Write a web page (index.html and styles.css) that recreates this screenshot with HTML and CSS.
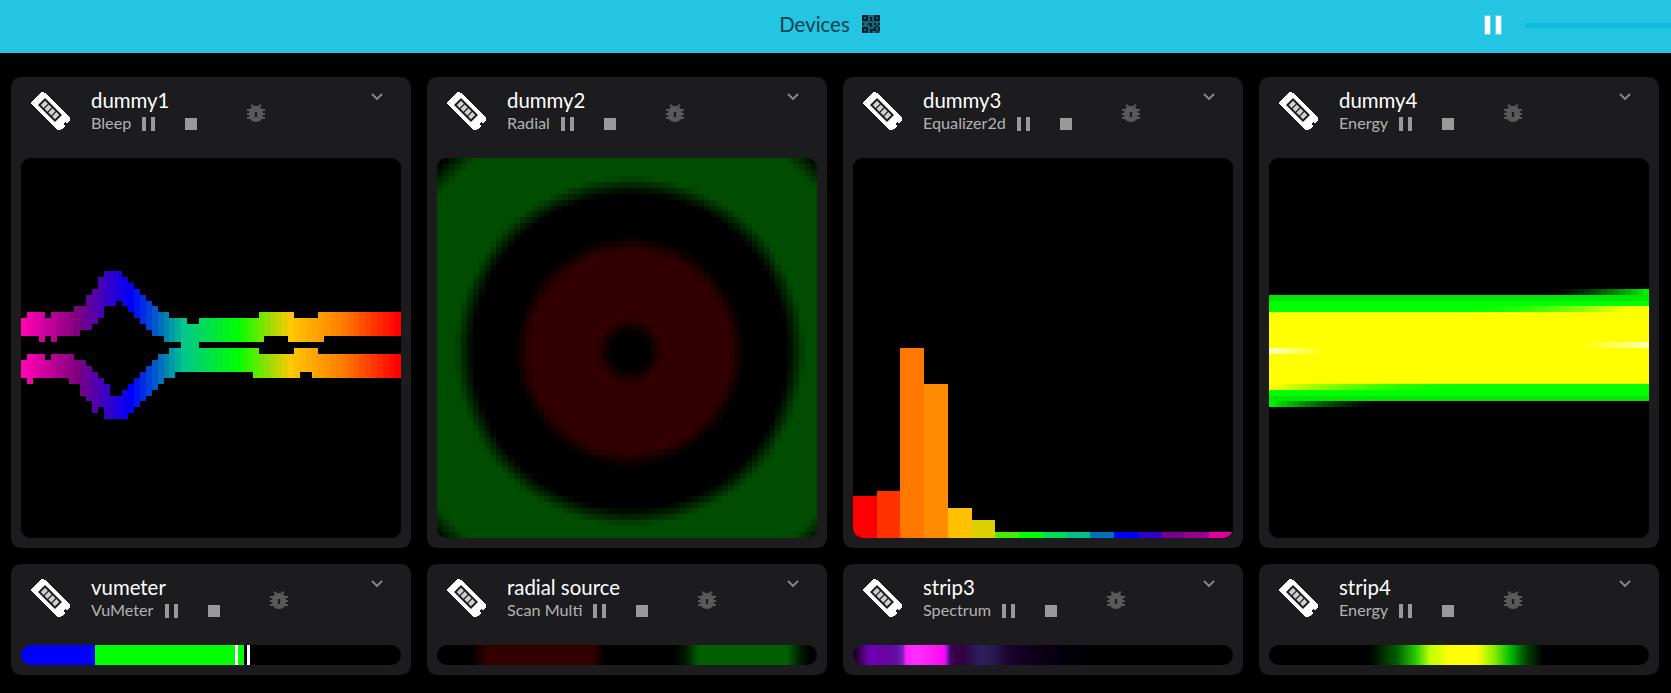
FILE: index.html
```html
<!DOCTYPE html>
<html lang="en">
<head>
  <meta charset="UTF-8">
  <title>Devices</title>
  <link rel="stylesheet" href="styles.css">
</head>
<body>

  <svg class="defs" width="0" height="0">
    <symbol id="icon-strip" viewBox="0 0 40 40">
      <path shape-rendering="crispEdges" fill="#fff" d="M11 0 L14 1 L39 26 L39 28 L36 31 L34 30 L33 32 L34 34 L31 37 L29 38 L27 38 L0 12 L0 10 Z"/>
      <g transform="translate(19 18) rotate(45)">
        <rect x="-12" y="-5" width="24" height="10" fill="#1c1c1e"/>
        <rect x="-10" y="-3" width="4" height="6" fill="#d0d0d0"/>
        <rect x="-4.7" y="-3" width="4" height="6" fill="#d0d0d0"/>
        <rect x="0.7" y="-3" width="4" height="6" fill="#d0d0d0"/>
        <rect x="6" y="-3" width="4" height="6" fill="#d0d0d0"/>
      </g>
    </symbol>
    <symbol id="icon-bug" viewBox="4 3 16 18" preserveAspectRatio="none">
      <path fill-rule="evenodd" d="M20 8H17.19C16.74 7.22 16.12 6.55 15.37 6.04L17 4.41L15.59 3L13.42 5.17C12.96 5.06 12.5 5 12 5C11.5 5 11.04 5.06 10.59 5.17L8.41 3L7 4.41L8.62 6.04C7.88 6.55 7.26 7.22 6.81 8H4V10H6.09C6.04 10.33 6 10.66 6 11V12H4V14H6V15C6 15.34 6.04 15.67 6.09 16H4V18H6.81C7.85 19.79 9.78 21 12 21C14.22 21 16.15 19.79 17.19 18H20V16H17.91C17.96 15.67 18 15.34 18 15V14H20V12H18V11C18 10.66 17.96 10.33 17.91 10H20V8ZM13 16H11V11H13Z"/>
    </symbol>
    <symbol id="icon-chevron" viewBox="0 0 12 8">
      <path d="M1 1 L6 6 L11 1" fill="none" stroke="currentColor" stroke-width="1.8"/>
    </symbol>
  </svg>

  <header class="topbar">
    <div class="topbar-title">
      <span>Devices</span>
      <svg class="qr" viewBox="3 3 18 18">
        <path d="M3,11H5V13H3V11M11,5H13V9H11V5M9,11H13V15H11V13H9V11M15,11H17V13H19V11H21V13H19V15H21V19H19V21H17V19H13V21H11V17H15V15H17V13H15V11M19,19V15H17V19H19M15,3H21V9H15V3M17,5V7H19V5H17M3,3H9V9H3V3M5,5V7H7V5H5M3,15H9V21H3V15M5,17V19H7V17H5Z"/>
      </svg>
    </div>
    <div class="topbar-controls">
      <span class="big-pause"><i></i><i></i></span>
      <div class="slider"></div>
    </div>
  </header>

  <main class="devices">

    <section class="card">
      <div class="card-head">
        <svg class="strip-icon"><use href="#icon-strip"/></svg>
        <div class="names">
          <div class="name">dummy1</div>
          <div class="effect">Bleep <span class="pause"><i></i><i></i></span><span class="stop"></span></div>
        </div>
        <svg class="bug"><use href="#icon-bug"/></svg>
        <svg class="chevron"><use href="#icon-chevron"/></svg>
      </div>
      <canvas class="matrix" id="bleep" width="64" height="64"></canvas>
    </section>

    <section class="card">
      <div class="card-head">
        <svg class="strip-icon"><use href="#icon-strip"/></svg>
        <div class="names">
          <div class="name">dummy2</div>
          <div class="effect">Radial <span class="pause"><i></i><i></i></span><span class="stop"></span></div>
        </div>
        <svg class="bug"><use href="#icon-bug"/></svg>
        <svg class="chevron"><use href="#icon-chevron"/></svg>
      </div>
      <canvas class="matrix" id="radial" width="64" height="64"></canvas>
    </section>

    <section class="card">
      <div class="card-head">
        <svg class="strip-icon"><use href="#icon-strip"/></svg>
        <div class="names">
          <div class="name">dummy3</div>
          <div class="effect">Equalizer2d <span class="pause"><i></i><i></i></span><span class="stop"></span></div>
        </div>
        <svg class="bug"><use href="#icon-bug"/></svg>
        <svg class="chevron"><use href="#icon-chevron"/></svg>
      </div>
      <canvas class="matrix" id="equalizer" width="64" height="64"></canvas>
    </section>

    <section class="card">
      <div class="card-head">
        <svg class="strip-icon"><use href="#icon-strip"/></svg>
        <div class="names">
          <div class="name">dummy4</div>
          <div class="effect">Energy <span class="pause"><i></i><i></i></span><span class="stop"></span></div>
        </div>
        <svg class="bug"><use href="#icon-bug"/></svg>
        <svg class="chevron"><use href="#icon-chevron"/></svg>
      </div>
      <canvas class="matrix" id="energy" width="64" height="64"></canvas>
    </section>

    <section class="card">
      <div class="card-head">
        <svg class="strip-icon"><use href="#icon-strip"/></svg>
        <div class="names">
          <div class="name">vumeter</div>
          <div class="effect">VuMeter <span class="pause"><i></i><i></i></span><span class="stop"></span></div>
        </div>
        <svg class="bug"><use href="#icon-bug"/></svg>
        <svg class="chevron"><use href="#icon-chevron"/></svg>
      </div>
      <div class="strip strip-vumeter"></div>
    </section>

    <section class="card">
      <div class="card-head">
        <svg class="strip-icon"><use href="#icon-strip"/></svg>
        <div class="names">
          <div class="name">radial source</div>
          <div class="effect">Scan Multi <span class="pause"><i></i><i></i></span><span class="stop"></span></div>
        </div>
        <svg class="bug"><use href="#icon-bug"/></svg>
        <svg class="chevron"><use href="#icon-chevron"/></svg>
      </div>
      <div class="strip strip-scan"></div>
    </section>

    <section class="card">
      <div class="card-head">
        <svg class="strip-icon"><use href="#icon-strip"/></svg>
        <div class="names">
          <div class="name">strip3</div>
          <div class="effect">Spectrum <span class="pause"><i></i><i></i></span><span class="stop"></span></div>
        </div>
        <svg class="bug"><use href="#icon-bug"/></svg>
        <svg class="chevron"><use href="#icon-chevron"/></svg>
      </div>
      <div class="strip strip-spectrum"></div>
    </section>

    <section class="card">
      <div class="card-head">
        <svg class="strip-icon"><use href="#icon-strip"/></svg>
        <div class="names">
          <div class="name">strip4</div>
          <div class="effect">Energy <span class="pause"><i></i><i></i></span><span class="stop"></span></div>
        </div>
        <svg class="bug"><use href="#icon-bug"/></svg>
        <svg class="chevron"><use href="#icon-chevron"/></svg>
      </div>
      <div class="strip strip-energy"></div>
    </section>

  </main>

  <script src="script.js"></script>
</body>
</html>
```
FILE: styles.css
```css
* {
  box-sizing: border-box;
}

body {
  margin: 0;
  background: #000;
  color: #fff;
  font-family: Lato, "Noto Sans", sans-serif;
  overflow: hidden;
}

.defs {
  position: absolute;
}

.topbar {
  display: flex;
  align-items: center;
  justify-content: center;
  height: 53px;
  background: #23c5e2;
  position: relative;
}

.topbar-title {
  display: flex;
  align-items: center;
  gap: 12px;
  margin-top: -5px;
  margin-left: -12px;
  font-size: 20.4px;
  color: #0d3d4d;
}

.qr {
  width: 18px;
  height: 18px;
  fill: #03202b;
  background: #1a6478;
}

.topbar-controls {
  position: absolute;
  top: 0;
  right: 0;
  bottom: 0;
  display: flex;
  align-items: center;
  gap: 24px;
  padding-bottom: 3px;
}

.big-pause {
  display: flex;
  gap: 6px;
}

.big-pause i {
  width: 5px;
  height: 18px;
  background: #fff;
  box-shadow: 0 0 0 1px rgba(255, 255, 255, 0.3);
}

.slider {
  width: 146px;
  height: 5px;
  background: #10bbdc;
  border-radius: 2px 0 0 2px;
}

.devices {
  display: grid;
  grid-template-columns: repeat(4, 400px);
  gap: 16px;
  padding: 24px 0 0 11px;
}

.card {
  background: #1c1c1e;
  border-radius: 10px;
  padding: 10px;
}

.card-head {
  display: flex;
  height: 71px;
  padding-left: 10px;
}

.strip-icon {
  width: 40px;
  height: 40px;
  margin-top: 5px;
  flex: none;
}

.names {
  margin-left: 20px;
  height: 46px;
  margin-top: 1px;
}

.name {
  font-size: 20.4px;
  line-height: 24px;
  white-space: nowrap;
}

.effect {
  display: flex;
  align-items: center;
  font-size: 16.2px;
  line-height: 22px;
  color: #b3b3b3;
  white-space: nowrap;
}

.pause {
  display: flex;
  gap: 5px;
  margin: 2px 0 0 11px;
}

.pause i {
  width: 4px;
  height: 14px;
  background: #999;
}

.stop {
  width: 12px;
  height: 12px;
  margin: 2px 0 0 30px;
  background: #999;
}

.bug {
  width: 18px;
  height: 18px;
  margin: 17px 0 0 50px;
  fill: #595959;
  flex: none;
}

.chevron {
  width: 12px;
  height: 8px;
  margin: 6px 18px 0 auto;
  color: #8a8a8a;
  flex: none;
}

.matrix {
  display: block;
  width: 380px;
  height: 380px;
  border-radius: 10px;
  background: #000;
  image-rendering: pixelated;
}

.strip {
  height: 20px;
  border-radius: 10px;
}

.strip-vumeter {
  background: linear-gradient(90deg,
    #0000ff 74px, #00ff00 74px,
    #00ff00 214px, #fff 214px,
    #fff 217px, #00ff00 217px,
    #00ff00 223px, #000 223px,
    #000 226px, #fff 226px,
    #fff 229px, #000 229px);
}

.strip-scan {
  background: linear-gradient(90deg,
    #000 33px, #330000 50px,
    #330000 156px, #000 168px,
    #000 236px, #001800 248px, #006000 262px,
    #006000 350px, #001800 364px, #000 373px);
}

.strip-spectrum {
  background: linear-gradient(90deg,
    #150020 0, #3a0050 7px, #7000b0 15px,
    #6a00a8 30px, #6010a0 44px, #8020c0 50px,
    #ff20ff 53px, #ff30ff 64px, #ff10f0 87px,
    #ff00ff 92px, #8020d0 94px, #400050 98px,
    #300040 110px, #2a2060 127px, #2a1a50 140px,
    #1a0530 154px, #10001a 177px, #060010 204px,
    #000 237px);
}

.strip-energy {
  background: linear-gradient(90deg,
    #000 101px, #006000 128px, #30d000 148px,
    #c0ff00 161px, #ffff00 181px, #ffff00 208px,
    #90f000 224px, #00c000 241px, #004000 258px,
    #000 274px);
}
```
FILE: script.js
```js
// the four matrix previews, 64x64 like the real devices

const RAINBOW = [
  [0, 255, 0, 0],
  [0.14, 255, 120, 0],
  [0.28, 255, 200, 0],
  [0.42, 0, 255, 0],
  [0.56, 0, 199, 140],
  [0.70, 0, 0, 255],
  [0.84, 128, 0, 128],
  [0.98, 255, 0, 178]
];

function rainbow(t) {
  for (let i = 1; i < RAINBOW.length; i++) {
    if (t <= RAINBOW[i][0]) {
      const a = RAINBOW[i - 1];
      const b = RAINBOW[i];
      const k = (t - a[0]) / (b[0] - a[0]);
      return "rgb(" + [1, 2, 3].map(n => Math.round(a[n] + (b[n] - a[n]) * k)).join(",") + ")";
    }
  }
  return "rgb(255,0,178)";
}

function clamp(v) {
  return Math.max(0, Math.min(1, v));
}

function mix(a, b, k) {
  return "rgb(" + a.map((v, i) => Math.round(v + (b[i] - v) * k)).join(",") + ")";
}

function context(id) {
  const ctx = document.getElementById(id).getContext("2d");
  ctx.fillStyle = "#000";
  ctx.fillRect(0, 0, 64, 64);
  return ctx;
}

function drawBleep() {
  // [top, bottom) of both bands, one entry per column
  const upper = [
    [27,30],[26,30],[26,30],[26,31],[27,30],[26,31],[26,30],[26,30],[26,30],[25,30],[25,29],
    [23,29],[22,28],[20,27],[19,25],[19,25],[19,24],[20,25],[21,26],[22,27],[23,28],[24,29],
    [25,30],[26,30],[26,31],[27,31],[27,31],[27,32],[28,32],[28,32],[27,31],[27,31],[27,31],
    [27,31],[27,31],[27,31],[27,31],[27,31],[27,31],[27,31],[26,31],[26,30],[26,30],[26,30],
    [26,30],[26,31],[27,31],[27,31],[27,31],[27,31],[26,31],[26,30],[26,30],[26,30],[26,30],
    [26,30],[26,30],[26,30],[26,30],[26,30],[26,30],[26,30],[26,30],[26,30]
  ];
  const lower = [
    [34,37],[33,38],[33,37],[33,37],[34,37],[33,37],[33,37],[33,37],[33,38],[34,38],[34,40],
    [35,41],[36,43],[37,42],[38,44],[40,44],[40,44],[39,44],[38,43],[37,42],[36,41],[35,40],
    [34,39],[33,38],[33,37],[32,37],[32,36],[32,36],[32,36],[32,36],[32,36],[32,36],[32,36],
    [32,36],[32,36],[32,36],[32,36],[32,36],[32,36],[32,37],[33,37],[33,37],[33,37],[33,37],
    [33,37],[33,37],[32,37],[32,36],[32,36],[32,37],[33,37],[33,37],[33,37],[33,37],[33,37],
    [33,37],[33,37],[33,37],[33,37],[33,37],[33,37],[33,37],[33,37],[33,37]
  ];
  const ctx = context("bleep");
  for (let c = 0; c < 64; c++) {
    ctx.fillStyle = rainbow(0.98 * (1 - c / 63));
    ctx.fillRect(c, upper[c][0], 1, upper[c][1] - upper[c][0]);
    ctx.fillRect(c, lower[c][0], 1, lower[c][1] - lower[c][0]);
  }
}

function drawRadial() {
  const ctx = context("radial");
  const black = [0, 0, 0];
  const red = [50, 0, 0];
  const green = [0, 76, 0];
  for (let y = 0; y < 64; y++) {
    for (let x = 0; x < 64; x++) {
      const d = Math.hypot(x + 0.5 - 32.5, y + 0.5 - 32.6);
      if (d < 23) {
        ctx.fillStyle = mix(black, red, clamp((d - 3) / 2.6) * clamp((19.4 - d) / 2.6));
      } else {
        ctx.fillStyle = mix(black, green, clamp((d - 26.5) / 3) * clamp((45 - d) / 3.5));
      }
      ctx.fillRect(x, y, 1, 1);
    }
  }
}

function drawEqualizer() {
  const bars = [
    [7, "#ff0000"], [8, "#ff3300"], [32, "#ff7800"], [26, "#ff8c00"],
    [5, "#ffc000"], [3, "#ddd000"], [1, "#44ee00"], [1, "#00ff00"],
    [1, "#00dd55"], [1, "#00bf8a"], [1, "#0070bb"], [1, "#0000ff"],
    [1, "#3000cc"], [1, "#7a0090"], [1, "#990090"], [1, "#e000a0"]
  ];
  const ctx = context("equalizer");
  bars.forEach((bar, i) => {
    ctx.fillStyle = bar[1];
    ctx.fillRect(i * 4, 64 - bar[0], 4, bar[0]);
  });
}

function drawEnergy() {
  const ctx = context("energy");
  const green = [0, 255, 0];
  const yellow = [255, 255, 0];
  const black = [0, 0, 0];
  for (let c = 0; c < 64; c++) {
    const col = (row, color) => {
      ctx.fillStyle = color;
      ctx.fillRect(c, row, 1, 1);
    };
    ctx.fillStyle = "rgb(255,255,0)";
    ctx.fillRect(c, 26, 1, 12);
    col(22, mix(black, [0, 240, 0], Math.pow(clamp((c - 47) / 16), 1.5)));
    col(23, "rgb(0,232,0)");
    col(24, "rgb(0,255,0)");
    col(25, mix(green, yellow, Math.pow(clamp((c - 30) / 30), 2)));
    col(31, mix(yellow, [255, 255, 170], clamp((c - 52) / 11)));
    col(32, mix([255, 255, 190], yellow, clamp(c / 9)));
    col(38, mix(yellow, green, 1 - Math.pow(1 - clamp(c / 35), 2)));
    col(39, "rgb(0,255,0)");
    col(40, "rgb(0,232,0)");
    col(41, mix(black, [0, 240, 0], Math.pow(1 - clamp(c / 18), 1.5)));
  }
}

drawBleep();
drawRadial();
drawEqualizer();
drawEnergy();
```
